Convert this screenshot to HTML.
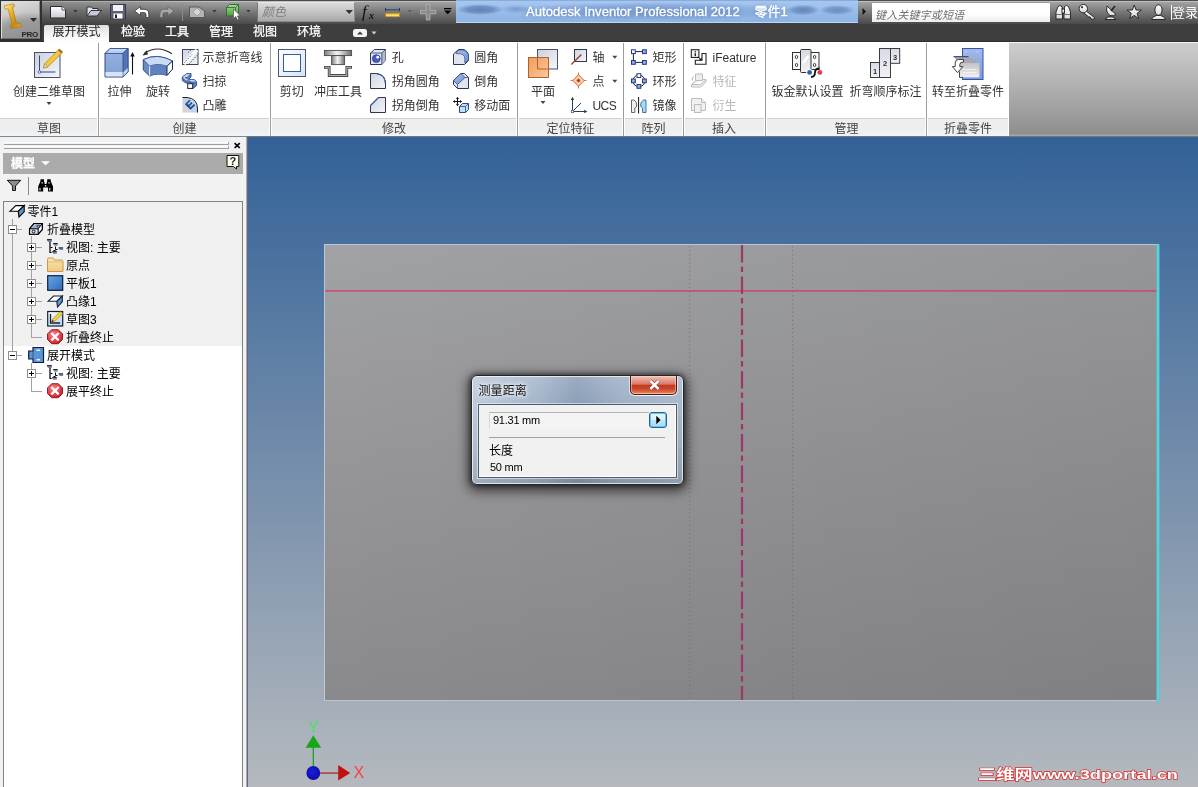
<!DOCTYPE html>
<html lang="zh-CN">
<head>
<meta charset="utf-8">
<title>Autodesk Inventor Professional 2012 零件1</title>
<style>
*{box-sizing:border-box;margin:0;padding:0}
html,body{width:1198px;height:787px;overflow:hidden;background:#fff}
body{position:relative;will-change:transform;font-family:"Liberation Sans","Noto Sans CJK SC",sans-serif;font-size:12px;color:#333;line-height:1}
.abs{position:absolute}
svg{position:absolute;overflow:visible}
/* ---------- title / quick access ---------- */
#qat{left:0;top:0;width:456px;height:24px;background:linear-gradient(90deg,rgba(0,0,0,.17) 0,rgba(0,0,0,.1) 90px,rgba(0,0,0,.02) 200px,rgba(0,0,0,0) 260px),linear-gradient(#4c4c4c 0,#4c4c4c 1px,#c0c0c0 1px,#c0c0c0 2px,#a2a2a2 2px,#8a8a8a 8px,#787878 12px,#686868 16px,#585858 20px,#505050 22.500px,#5a5a5a 23px,#3e3e3e 24px)}
#combo{left:257px;top:2px;width:98px;height:20px;background:linear-gradient(#dadada 0,#c6c6c6 45%,#a8a8a8 100%);border:1px solid #8a8a8a;border-top-color:#e8e8e8;border-left-color:#777}
#combo span{position:absolute;left:4px;top:3px;font-style:italic;color:#7c7c7c;font-size:12px}
#aero{left:456px;top:0;width:402px;height:24px;background:
radial-gradient(ellipse 24px 5.500px at 24px 9.500px,rgba(80,112,168,.78) 0,rgba(80,112,168,.6) 55%,rgba(80,112,168,0) 100%),
radial-gradient(ellipse 16px 4.500px at 60px 9px,rgba(86,118,172,.5) 0,rgba(86,118,172,0) 100%),
radial-gradient(ellipse 17px 5.500px at 347px 10px,rgba(80,112,168,.75) 0,rgba(80,112,168,.5) 55%,rgba(80,112,168,0) 100%),
radial-gradient(ellipse 18px 5px at 381px 10px,rgba(80,112,168,.65) 0,rgba(80,112,168,.45) 55%,rgba(80,112,168,0) 100%),
radial-gradient(ellipse 150px 9px at 200px 11px,rgba(96,130,190,.5) 0,rgba(96,130,190,.3) 60%,rgba(96,130,190,0) 100%),
linear-gradient(#7f9fca 0,#a4c6f0 1.500px,#9fc2ee 8px,#92b8e6 16px,#8fb5e4 21.500px,#bdd7f5 22px,#bdd7f5 23px,#3e3e3e 23px)}
#tright{left:858px;top:0;width:340px;height:24px;background:linear-gradient(#4c4c4c 0,#4c4c4c 1px,#c0c0c0 1px,#c0c0c0 2px,#a2a2a2 2px,#8a8a8a 8px,#787878 12px,#686868 16px,#585858 20px,#505050 22.500px,#5a5a5a 23px,#3e3e3e 24px)}
#search{left:872px;top:2px;width:178px;height:20px;background:linear-gradient(#fff 0,#fff 60%,#ececec 100%);border-top:1px solid #9a9a9a}
#search span{position:absolute;left:3px;top:7px;font-style:italic;color:#6e6e6e;font-size:11px;white-space:nowrap;letter-spacing:.15px}
#login{left:1172px;top:6px;color:#fff;font-size:13px;white-space:nowrap;letter-spacing:0}
#tabbar{left:0;top:24px;width:1198px;height:18px;background:#3e3e3e;border-bottom:1px solid #2e2e2e}
#title{left:526px;top:5px;color:#fff;font-size:13px;white-space:pre;letter-spacing:.04px;-webkit-text-stroke:.3px #fff;text-shadow:0 0 4px rgba(50,80,140,.55)}
#appbtn{left:0;top:0;width:42px;height:41px;background:#303030}
#appbtn i{position:absolute;left:1px;top:1px;width:39px;height:38px;background:radial-gradient(ellipse 62px 36px at 78% 110%,rgba(110,110,110,.5) 0,rgba(110,110,110,.42) 60%,rgba(110,110,110,0) 82%),linear-gradient(165deg,#e0e0e0 0,#c6c6c6 40%,#acacac 100%);border:1px solid #dcdcdc;border-right-color:#909090;border-bottom-color:#6c6c6c}
#pro{left:21.500px;top:31px;font-size:8px;font-weight:bold;color:#262626;letter-spacing:-.35px}
.tab{top:25px;height:17px;color:#fff;-webkit-text-stroke:.25px #fff;font-size:12px;line-height:15px;text-align:center;white-space:nowrap}
#tabact{left:44px;top:25px;width:65px;height:17px;background:linear-gradient(#dcdcdc 0,#efefef 40%,#fff 100%);border-radius:2px 2px 0 0}
/* ---------- ribbon ---------- */
#ribbon{left:0;top:42px;width:1009px;height:94px;background:#fff}
#ribtitles{left:0;top:118px;width:1008px;height:18px;background:linear-gradient(#eee 0,#eee 65%,#eaf0f6 75%,#eef2f6 88%,#f4f4f4 100%);border-top:1px solid #d0d0d0}
#ribright{left:1009px;top:42px;width:189px;height:94px;background:linear-gradient(#f4f4f4 0,#f4f4f4 1px,#cdcdcd 1px,#b8b8b8 35%,#9e9e9e 75%,#8e8e8e 92px,#a8a4a4 93px,#a8a4a4 94px)}
.vsep{top:43px;width:3px;height:93px;margin-left:-1px;background:linear-gradient(90deg,#fff 0,#fff 1px,#9c9c9c 1px,#9c9c9c 2px,#fff 2px)}
.pt{top:122px;height:14px;line-height:14px;text-align:center;color:#444;font-size:12px}
.big{top:85px;height:14px;line-height:14px;text-align:center;white-space:nowrap;color:#333}
.sm{height:14px;line-height:14px;white-space:nowrap;color:#333}
.dis{color:#b8b8b8}
.dd{width:0;height:0;border-left:3px solid transparent;border-right:3px solid transparent;border-top:3px solid #444}
/* ---------- browser panel ---------- */
#panel{left:0;top:136px;width:248px;height:651px;background:#f2f2f2;border-top:1px solid #868686;border-right:1px solid #5f6b7b}
#panel:after{content:"";position:absolute;right:0;top:0;width:1px;height:100%;background:#a8aeb8}
#phead{left:3px;top:153px;width:240px;height:21px;background:#ababab}
#phead b{position:absolute;left:8px;top:5px;-webkit-text-stroke:.3px #fff;color:#fff;font-size:12px;text-shadow:0 0 1px #999}
#tree{left:3px;top:201px;width:240px;height:590px;border:1px solid #828282;background:#fff}
#treegray{left:4px;top:202px;width:238px;height:144px;background:#f0f0f0}
.tr{height:18px;line-height:18px;white-space:nowrap;color:#000;font-size:12px}
.exp{width:9px;height:9px;border:1px solid #919191;background:#fff}
.exp:before{content:"";position:absolute;left:1px;top:3px;width:5px;height:1px;background:#000}
.exp.plus:after{content:"";position:absolute;left:3px;top:1px;width:1px;height:5px;background:#000}
.tl{background:#a0a0a0}
/* ---------- viewport ---------- */
#view{left:248px;top:137px;width:950px;height:650px;background:linear-gradient(#326198 0,#b5b9be 100%)}
#viewtop{left:247px;top:136px;width:951px;height:2px;background:linear-gradient(#6c7684 0,#6c7684 50%,#3f628f 50%)}
#sheet{left:324px;top:244px;width:834px;height:457px;background:linear-gradient(90deg,rgba(0,0,0,0) 0,rgba(0,0,0,.075) 100%),linear-gradient(#a1a2a4 0,#8a898c 100%);border-left:1px solid #bcc6d4;border-top:1px solid #b8c6da;border-bottom:1px solid #c0c5cc}
/* ---------- dialog ---------- */
#dlg{left:471px;top:375px;width:213px;height:110px;border-radius:6px;border:1px solid #262626;background:linear-gradient(rgba(255,255,255,.14) 0,rgba(255,255,255,0) 28px,rgba(0,0,0,.05) 60%,rgba(0,0,0,.15) 100%),linear-gradient(90deg,#bdcbdc 0,#a6b7cc 30%,#8b9eb7 50%,#9fb0c6 70%,#a9b8cc 100%);box-shadow:0 3px 12px 3px rgba(0,0,0,.62),0 0 4px 1px rgba(0,0,0,.4),inset 0 0 0 1px rgba(255,255,255,.7)}
#dlgin{left:478px;top:404px;width:199px;height:74px;background:#f1f1f1;border:1px solid #4e5a68;box-shadow:0 0 0 1px rgba(235,242,252,.62),inset -1px -1px 0 #fff}
#dlgt{left:478.500px;top:385px;letter-spacing:.1px;font-size:12px;color:#111;text-shadow:0 0 6px #fff,0 0 4px #fff}
#dclose{left:630px;top:376px;width:47px;height:19px;border:1px solid #4a1a14;border-top:0;border-radius:0 0 5px 5px;background:linear-gradient(#f0c4ba 0,#e39a8c 25%,#d8796a 46%,#c23a20 50%,#c8442a 70%,#dc7048 90%,#eaa078 100%);box-shadow:inset 0 0 0 1px rgba(255,225,215,.5),1px 1px 0 rgba(255,255,255,.6),-1px 1px 0 rgba(255,255,255,.6)}
#dfield{left:489px;top:412px;width:160px;height:16px;border-top:1px solid #b4b4b4;border-left:1px solid #d8d8d8;background:#f4f4f4}
#dbtn{left:649px;top:412px;width:18px;height:16px;border:1px solid #2c628b;border-radius:3px;background:linear-gradient(#eaf6fd 0,#d9f0fc 50%,#bee6fd 50%,#a7d9f5 100%);box-shadow:inset 0 0 0 1px #5fc8f0}
.dtx{font-size:11px;color:#000;white-space:nowrap;letter-spacing:-.25px}
</style>
</head>
<body>

<!-- title bar -->
<div class="abs" id="qat"></div>
<div class="abs" id="combo"><span>颜色</span></div>
<div class="abs" id="aero"></div>
<div class="abs" id="tright"></div>
<div class="abs" id="tabbar"></div>
<div class="abs" id="appbtn"><i></i></div>
<div class="abs" id="pro">PRO</div>
<div class="abs" id="title">Autodesk Inventor Professional 2012    零件1</div>
<div class="abs" id="search"><span>键入关键字或短语</span></div>
<div class="abs" id="login">登录</div>
<div class="abs" id="tabact"></div>
<svg class="abs" style="left:0;top:0" width="1198" height="42" viewBox="0 0 1198 42">
<defs>
<linearGradient id="gold" x1="0" y1="0" x2="1" y2="1"><stop offset="0" stop-color="#fff0a0"/><stop offset=".35" stop-color="#f0b828"/><stop offset=".7" stop-color="#c88810"/><stop offset="1" stop-color="#e8a820"/></linearGradient>
<linearGradient id="wg" x1="0" y1="0" x2="0" y2="1"><stop offset="0" stop-color="#fff"/><stop offset="1" stop-color="#c8ccd8"/></linearGradient>
<linearGradient id="grn" x1="0" y1="0" x2="0" y2="1"><stop offset="0" stop-color="#a8dc98"/><stop offset="1" stop-color="#4c9c40"/></linearGradient>
</defs>
<!-- I logo -->
<path d="M4.200 5.800 L13.800 3.800 L14.600 6.600 L12.400 7.200 L16.400 23 L20.600 23.400 L21.600 26.600 L10.800 28.400 L10 25.600 L12.200 25 L8.200 9 L5 9 Z" fill="url(#gold)" stroke="#9a6a08" stroke-width=".5"/>
<path d="M30 18 L37 18 L33.5 22 Z" fill="#2c2c2c"/>
<!-- new -->
<path d="M50.5 6.5 H62 L65.5 10 V18 H50.5 Z" fill="url(#wg)" stroke="#2a2a2a" stroke-width="1"/>
<path d="M62 6.5 V10 H65.5" fill="#fff" stroke="#2a2a2a" stroke-width=".8"/>
<path d="M73.200 10 h4.400 l-2.200 2.600 z" fill="#333"/>
<!-- open -->
<path d="M87 15.5 V7 H91.5 L92.5 8.5 H98 V10.5" fill="#dfe3ec" stroke="#333" stroke-width="1"/>
<path d="M87 16 L91 10.5 H101.5 L97 16 Z" fill="#c4cad8" stroke="#333" stroke-width="1"/>
<!-- save -->
<rect x="110.500" y="4.500" width="15" height="14.500" fill="#5c6178" stroke="#34384c"/>
<rect x="113" y="5" width="10" height="6" fill="#f2f2f6"/>
<rect x="113.5" y="13.5" width="9" height="5" fill="#fff"/>
<rect x="115" y="14.5" width="2" height="3.5" fill="#222"/>
<!-- undo -->
<path d="M134.5 11 L140.5 6.5 V9.3 H144 Q148.8 9.3 148.8 14 V17.5 H146 V14.5 Q146 12.6 144 12.6 H140.5 V15.5 Z" fill="#fff" stroke="#333" stroke-width=".8"/>
<!-- redo -->
<path d="M174 11 L168 6.5 V9.3 H164.5 Q160 9.3 160 14 V17.5 H162.8 V14.5 Q162.8 12.6 164.5 12.6 H168 V15.5 Z" fill="#a8a8a8" stroke="#5a5a5a" stroke-width=".6"/>
<rect x="182" y="3" width="1" height="18" fill="#8a8a8a"/>
<!-- material -->
<path d="M189.5 7 H199 L204.5 11 V17.5 H189.5 Z" fill="#b4b4b4" stroke="#4a4a4a" stroke-width=".8"/>
<path d="M193 12 L197 8 L201 12 L197 16 Z" fill="#d8d8d8" stroke="#8a8a8a" stroke-width=".6"/>
<path d="M212.300 10 h4.400 l-2.200 2.600 z" fill="#383838"/>
<!-- green box -->
<path d="M226.5 7.5 L229.5 4.5 H238.5 V13 L235.5 16 H226.5 Z" fill="url(#grn)" stroke="#2c6a24" stroke-width=".9"/>
<path d="M226.5 7.5 H235.5 V16 M235.5 7.5 L238.5 4.5" fill="none" stroke="#2c6a24" stroke-width=".8"/>
<path d="M233.5 9 L233.5 18.5 L235.8 16.5 L237.5 20 L239 19.3 L237.4 16 L240 15.6 Z" fill="#fff" stroke="#333" stroke-width=".5"/>
<path d="M246.100 10 h4.400 l-2.200 2.600 z" fill="#383838"/>
<!-- combo arrow -->
<path d="M345.5 10 h7.5 l-3.75 4 z" fill="#333"/>
<!-- fx -->
<text x="362" y="17" font-family="Liberation Serif,serif" font-style="italic" font-size="17" fill="#111">f</text>
<text x="369" y="19" font-family="Liberation Serif,serif" font-style="italic" font-weight="bold" font-size="10" fill="#111">x</text>
<!-- measure -->
<path d="M385.5 8 V11.5 M399.5 8 V11.5 M385.5 9.8 H399.5" stroke="#27406a" stroke-width="1" fill="none"/>
<rect x="385.5" y="13.3" width="14" height="3.2" fill="#f4d040" stroke="#d08a10" stroke-width=".8"/>
<path d="M388 15 v1.5 M390.5 15 v1.5 M393 15 v1.5 M395.5 15 v1.5 M398 15 v1.5" stroke="#fff" stroke-width=".8"/>
<path d="M407.5 10 h4.4 l-2.2 2.6 z" fill="#5a5a5a"/>
<!-- plus -->
<path d="M426.3 4.5 H430 V10.3 H435.8 V13.8 H430 V20 H426.3 V13.8 H420.5 V10.3 H426.3 Z" fill="#8c8c8c" stroke="#b0b0b0" stroke-width=".9"/>
<!-- customize -->
<rect x="444" y="8" width="7.4" height="1.3" fill="#000"/>
<path d="M444 10.5 h7.4 l-3.7 3.8 z" fill="#000"/>
<!-- search arrow -->
<path d="M862.5 8 L866 11.5 L862.5 15 Z" fill="#111"/>
<!-- tab-extra icon -->
<rect x="353" y="29" width="14" height="8" rx="2.5" fill="#f4f4f4"/>
<path d="M357 34.5 L360 31.5 L363 34.5 Z" fill="#3c3c3c"/>
<path d="M371.5 31.5 h5 l-2.5 3 z" fill="#d0d0d0"/>
</svg>

<svg class="abs" style="left:1048px;top:0" width="150" height="26" viewBox="1048 0 150 26">
<defs><linearGradient id="wg2" x1="0" y1="0" x2="0" y2="1"><stop offset="0" stop-color="#fff"/><stop offset="1" stop-color="#d4d6dc"/></linearGradient></defs>
<!-- binoculars -->
<g fill="url(#wg2)" stroke="#1c1c1c" stroke-width=".9">
<path d="M1056 19 V12 L1058 6.5 Q1060 4.5 1062 6.5 L1062.5 12 V19 Z"/>
<path d="M1070.5 19 V12 L1068.5 6.5 Q1066.5 4.5 1064.5 6.5 L1064 12 V19 Z"/>
<rect x="1062" y="9" width="2.5" height="4"/>
</g>
<path d="M1056 14.5 h6.5 M1064 14.5 h6.5" stroke="#555" stroke-width=".8"/>
<!-- key -->
<g fill="url(#wg2)" stroke="#1c1c1c" stroke-width=".9">
<path d="M1085.5 10.5 L1094.5 17.5 L1093.6 19.4 L1091 19 L1090.4 17.2 L1088.6 16.8 L1083.4 12.6 Z"/>
<circle cx="1083.3" cy="8.6" r="4.2"/>
</g>
<circle cx="1082" cy="7.2" r="1.1" fill="#333"/>
<!-- dish -->
<g fill="url(#wg2)" stroke="#1c1c1c" stroke-width=".9">
<path d="M1108 17 L1113 17 L1116 19.5 H1105 Z"/>
<path d="M1107 6 Q1105.5 12.5 1110 15.5 Q1113.5 16.5 1116 14.5 Z"/>
</g>
<path d="M1111 11 L1115 6" stroke="#1c1c1c" stroke-width="1.4"/>
<!-- star -->
<path d="M1134.2 5 L1136 10 L1141.3 10.1 L1137.1 13.3 L1138.6 18.5 L1134.2 15.4 L1129.8 18.5 L1131.3 13.3 L1127.1 10.1 L1132.4 10 Z" fill="url(#wg2)" stroke="#1c1c1c" stroke-width=".9"/>
<!-- person -->
<g fill="url(#wg2)" stroke="#1c1c1c" stroke-width=".9">
<path d="M1151.5 19.5 Q1152 16.5 1156.5 15.5 L1160.5 15.5 Q1165 16.5 1165.5 19.5 Z"/>
<ellipse cx="1158.5" cy="10" rx="3.6" ry="5.3"/>
</g>
<rect x="1171" y="5" width="1" height="15" fill="#fff"/>
</svg>

<div class="abs tab" style="left:41.5px;width:70px;color:#222;-webkit-text-stroke:0;">展开模式</div>
<div class="abs tab" style="left:98.0px;width:70px;">检验</div>
<div class="abs tab" style="left:142.0px;width:70px;">工具</div>
<div class="abs tab" style="left:186.0px;width:70px;">管理</div>
<div class="abs tab" style="left:230.0px;width:70px;">视图</div>
<div class="abs tab" style="left:274.0px;width:70px;">环境</div>
<div class="abs" id="ribbon"></div>
<div class="abs" id="ribtitles"></div>
<div class="abs" id="ribright"></div>
<div class="abs vsep" style="left:98px"></div>
<div class="abs vsep" style="left:270px"></div>
<div class="abs vsep" style="left:517px"></div>
<div class="abs vsep" style="left:623px"></div>
<div class="abs vsep" style="left:683px"></div>
<div class="abs vsep" style="left:765px"></div>
<div class="abs vsep" style="left:926px"></div>
<div class="abs pt" style="left:9px;width:80px">草图</div>
<div class="abs pt" style="left:144.5px;width:80px">创建</div>
<div class="abs pt" style="left:354px;width:80px">修改</div>
<div class="abs pt" style="left:530.5px;width:80px">定位特征</div>
<div class="abs pt" style="left:613.5px;width:80px">阵列</div>
<div class="abs pt" style="left:684px;width:80px">插入</div>
<div class="abs pt" style="left:806.5px;width:80px">管理</div>
<div class="abs pt" style="left:928px;width:80px">折叠零件</div>
<div class="abs big" style="left:-1px;width:100px">创建二维草图</div>
<div class="abs big" style="left:69.5px;width:100px">拉伸</div>
<div class="abs big" style="left:108px;width:100px">旋转</div>
<div class="abs big" style="left:241.75px;width:100px">剪切</div>
<div class="abs big" style="left:288px;width:100px">冲压工具</div>
<div class="abs big" style="left:493px;width:100px">平面</div>
<div class="abs big" style="left:757.5px;width:100px">钣金默认设置</div>
<div class="abs big" style="left:835.4px;width:100px">折弯顺序标注</div>
<div class="abs big" style="left:918px;width:100px">转至折叠零件</div>
<div class="abs sm" style="left:202.5px;top:50.5px">示意折弯线</div>
<div class="abs sm" style="left:202.5px;top:74.5px">扫掠</div>
<div class="abs sm" style="left:202.5px;top:98.5px">凸雕</div>
<div class="abs sm" style="left:391.75px;top:50.5px">孔</div>
<div class="abs sm" style="left:391.75px;top:74.5px">拐角圆角</div>
<div class="abs sm" style="left:391.75px;top:98.5px">拐角倒角</div>
<div class="abs sm" style="left:474.25px;top:50.5px">圆角</div>
<div class="abs sm" style="left:474.25px;top:74.5px">倒角</div>
<div class="abs sm" style="left:474.25px;top:98.5px">移动面</div>
<div class="abs sm" style="left:592.5px;top:50.5px">轴</div>
<div class="abs sm" style="left:592.5px;top:74.5px">点</div>
<div class="abs sm" style="left:592.5px;top:98.5px"><span style="letter-spacing:-.6px">UCS</span></div>
<div class="abs sm" style="left:652.5px;top:50.5px">矩形</div>
<div class="abs sm" style="left:652.5px;top:74.5px">环形</div>
<div class="abs sm" style="left:652.5px;top:98.5px">镜像</div>
<div class="abs sm" style="left:712.5px;top:50.5px">iFeature</div>
<div class="abs sm" style="left:712.5px;top:74.5px"><span class=dis>特征</span></div>
<div class="abs sm" style="left:712.5px;top:98.5px"><span class=dis>衍生</span></div>
<svg class="abs" style="left:0;top:42px" width="1009" height="94" viewBox="0 42 1009 94">
<defs>
<linearGradient id="gb" x1="0" y1="0" x2="1" y2="1"><stop offset="0" stop-color="#c9d0de"/><stop offset="1" stop-color="#f6f7fa"/></linearGradient>
<linearGradient id="gb2" x1="0" y1="0" x2="0" y2="1"><stop offset="0" stop-color="#d5dae4"/><stop offset="1" stop-color="#f2f3f6"/></linearGradient>
<linearGradient id="bl" x1="0" y1="0" x2="0" y2="1"><stop offset="0" stop-color="#9ab4e0"/><stop offset="1" stop-color="#7f9fd4"/></linearGradient>
<linearGradient id="blt" x1="0" y1="0" x2="0" y2="1"><stop offset="0" stop-color="#cfe0f6"/><stop offset="1" stop-color="#a9c4ea"/></linearGradient>
<linearGradient id="org" x1="0" y1="0" x2="1" y2="1"><stop offset="0" stop-color="#f39a58"/><stop offset="1" stop-color="#fcc79c"/></linearGradient>
<linearGradient id="met" x1="0" y1="0" x2="1" y2="0"><stop offset="0" stop-color="#7c7c7c"/><stop offset=".45" stop-color="#f2f2f2"/><stop offset=".6" stop-color="#d8d8d8"/><stop offset="1" stop-color="#6c6c6c"/></linearGradient>
<linearGradient id="cut" x1="0" y1="0" x2="1" y2="1"><stop offset="0" stop-color="#fff"/><stop offset="1" stop-color="#d6e2f2"/></linearGradient>
<linearGradient id="gry" x1="0" y1="0" x2="0" y2="1"><stop offset="0" stop-color="#c2c2c4"/><stop offset="1" stop-color="#f2f2f2"/></linearGradient>
<linearGradient id="fb" x1="0" y1="0" x2="0" y2="1"><stop offset="0" stop-color="#a4baec"/><stop offset="1" stop-color="#7d98dc"/></linearGradient>
</defs>
<!-- sketch -->
<rect x="34.5" y="52.5" width="25.5" height="25" fill="url(#gb)" stroke="#4a5068" stroke-width="1"/>
<path d="M39.5 55.5 V72 H55.5" fill="none" stroke="#3a4a78" stroke-width="1"/>
<circle cx="39.5" cy="72" r="1.3" fill="#fff" stroke="#2c4a9c" stroke-width=".8"/>
<path d="M43.5 68 L44.6 63.8 L59.4 48.9 L62.6 52.1 L47.7 66.9 Z" fill="#f4c838" stroke="#b8860c" stroke-width=".8"/>
<path d="M43.5 68 L44.6 63.8 L47.7 66.9 Z" fill="#f4e2c0" stroke="#9a7a40" stroke-width=".6"/>
<path d="M58 50.3 L59.4 48.9 L62.6 52.1 L61.2 53.5 Z" fill="#a46a28"/>
<path d="M47 49 47 49" />
<path d="M46.5 102 h5 l-2.5 3 z" fill="#444"/>
<!-- extrude -->
<path d="M105 53.5 L110 48.5 H128 V72 L123 77 H105 Z" fill="url(#bl)" stroke="#2c4a8c" stroke-width="1"/>
<path d="M105 53.5 L110 48.5 H128 L123 53.5 Z" fill="url(#blt)" stroke="#2c4a8c" stroke-width=".8"/>
<path d="M123 53.5 L128 48.5 V72 L123 77 Z" fill="#5574b4" stroke="#2c4a8c" stroke-width=".8"/>
<path d="M105.5 72 H122.6 V76.5 H105.5 Z" fill="#d6e4f6"/>
<path d="M123.4 72 L127.6 68 V71.8 L123.4 76.2 Z" fill="#c6d6ee"/>
<path d="M132.5 74.5 V54" stroke="#111" stroke-width="1.1"/>
<path d="M130.2 56.5 L132.5 52 L134.8 56.5 Z" fill="#111"/>
<!-- revolve -->
<path d="M172 53.800 Q158 44.600 144.800 53" fill="none" stroke="#2a2a2a" stroke-width="1.200"/>
<path d="M142.400 55.400 L146.600 50.200 L148 54.600 Z" fill="#2a2a2a"/>
<path d="M143.300 59.600 Q157.500 52.600 172.500 61 V69.200 L167 75.300 Q157.500 72.600 149.600 76 L143.300 70 Z" fill="#6a8cc4" stroke="#2c4a8c" stroke-width="1" stroke-linejoin="round"/>
<path d="M143.300 59.600 Q157.500 52.600 172.500 61 L167 66.200 Q157.500 62.800 149.600 66.200 Z" fill="#c9dcf4" stroke="#2c4a8c" stroke-width=".800" stroke-linejoin="round"/>
<path d="M149.600 66.200 Q157.500 62.800 167 66.200 V75.300 Q157.500 72.600 149.600 76 Z" fill="#5f82be"/>
<path d="M149.600 66.400 V75.800" stroke="#eef4fc" stroke-width="1"/>
<path d="M167 66.200 L172.500 61 V69.200 L167 75.300 Z" fill="#fff" stroke="#1c2c50" stroke-width="1" stroke-linejoin="round"/>
<!-- cut -->
<rect x="278.5" y="49.5" width="27" height="27" fill="url(#cut)" stroke="#50566a" stroke-width="1"/>
<rect x="283.5" y="54.5" width="17" height="17" fill="#fff" stroke="#2f5fa4" stroke-width="1"/>
<!-- punch -->
<rect x="324.400" y="50.400" width="27.200" height="5.200" fill="url(#met)" stroke="#4a4a4a" stroke-width=".900"/>
<rect x="331.600" y="55.600" width="13" height="9" fill="url(#met)" stroke="#4a4a4a" stroke-width=".900"/>
<path d="M324 67.300 H329.200 V75.500 H346.800 V67.300 H352" fill="none" stroke="#484848" stroke-width="2.800"/>
<path d="M324.800 67.300 H329.200 V75.500 H346.800 V67.300 H351.200" fill="none" stroke="#c4c4c4" stroke-width=".900"/>
<!-- plane -->
<rect x="537.5" y="49.5" width="20" height="19.5" fill="url(#gb)" stroke="#4a5068" stroke-width="1"/>
<rect x="528.5" y="57.5" width="20" height="20" fill="url(#org)" stroke="#b0622c" stroke-width="1"/>
<path d="M537.5 57.5 V69 H548.5" fill="none" stroke="#a0602c" stroke-width=".9"/>
<path d="M540.5 101 h5 l-2.5 3 z" fill="#444"/>
<!-- sheet metal defaults -->
<rect x="792.5" y="52.5" width="26.5" height="17" fill="#fafafa" stroke="#333" stroke-width="1"/>
<rect x="800.5" y="49.5" width="10.5" height="23" rx="1" fill="url(#gb2)" stroke="#333" stroke-width="1"/>
<path d="M803 63 L808.5 56" stroke="#fff" stroke-width="2.2"/>
<g fill="none" stroke="#333" stroke-width=".9"><ellipse cx="796.5" cy="57" rx="1.2" ry="1.6"/><ellipse cx="796.5" cy="65" rx="1.2" ry="1.6"/><ellipse cx="814.6" cy="57" rx="1.2" ry="1.6"/><ellipse cx="814.6" cy="65" rx="1.2" ry="1.6"/></g>
<circle cx="809.6" cy="72.4" r="3.4" fill="#fff"/>
<path d="M811 77 Q815 77 815 72.5 Q815 68.5 819.5 68.5" fill="none" stroke="#111" stroke-width="1.8"/>
<circle cx="809.6" cy="72.4" r="2.4" fill="#2c64a4"/>
<circle cx="819.8" cy="72.4" r="2.4" fill="#e03c50"/>
<!-- bend order -->
<rect x="879.5" y="48.5" width="11" height="29" fill="url(#gb2)" stroke="#3c3c3c" stroke-width="1"/>
<rect x="870.5" y="62.5" width="9" height="15" fill="url(#gb2)" stroke="#3c3c3c" stroke-width="1"/>
<rect x="890.5" y="48.5" width="9.2" height="14.8" fill="url(#gb2)" stroke="#3c3c3c" stroke-width="1"/>
<g font-family="Liberation Sans,sans-serif" font-weight="bold" font-size="7.5" fill="#333" text-anchor="middle"><text x="875.2" y="73.5">1</text><text x="885" y="66">2</text><text x="895.2" y="59.5">3</text></g>
<!-- go to folded -->
<rect x="962.5" y="48.5" width="20.5" height="31" fill="url(#fb)" stroke="#3355a8" stroke-width="1"/>
<g fill="#b8c8f0"><rect x="965" y="51" width="2.2" height="1.6"/><rect x="976.5" y="51" width="2.2" height="1.6"/></g>
<path d="M953.5 56.5 H968 L979.4 63 H959.4 Z" fill="#a6a8b4"/>
<path d="M953.5 56.7 H968.5" stroke="#2a3560" stroke-width="1"/>
<rect x="959.4" y="63" width="20" height="14.3" fill="url(#gry)"/>
<path d="M963 69.5 h13 M963 72.5 h13" stroke="#fff" stroke-width=".8" opacity=".7"/>
<path d="M963.500 59.500 H958.500 Q955.200 59.500 955.200 63 V66.600 H952.300 L957.500 72.600 L962.800 66.600 H959.800 V64.600 Q959.800 62 963.500 61.900 Z" fill="#fff" stroke="#2c2c2c" stroke-width=".900" stroke-linejoin="round"/>
<path d="M959.500 71.500 V77.400 H963" fill="none" stroke="#333" stroke-width=".900"/>
</svg>

<svg class="abs" style="left:0;top:42px" width="1009" height="94" viewBox="0 42 1009 94">
<defs>
<linearGradient id="sg" x1="0" y1="0" x2="1" y2="1"><stop offset="0" stop-color="#cdd4e2"/><stop offset="1" stop-color="#f4f5f9"/></linearGradient>
<linearGradient id="sb" x1="0" y1="0" x2="1" y2="1"><stop offset="0" stop-color="#a9c4f0"/><stop offset="1" stop-color="#6c8ed4"/></linearGradient>
</defs>
<!-- A1 cosmetic centerline -->
<rect x="182.5" y="49.5" width="15.5" height="15" fill="url(#sg)" stroke="#3a4058" stroke-width="1"/>
<path d="M184 64 L197 50" stroke="#fff" stroke-width="3.4"/>
<path d="M184.5 62.5 L192 54.5 M189.5 63.5 L197 55.5 M188 52.5 L191 50" stroke="#2e3a58" stroke-width="1" stroke-dasharray="1.100 1.400"/>
<!-- A2 sweep -->
<path d="M187 73.500 H191 V77 L188.500 79.500 H194 L196.600 82 V85.500 L193 88.500 H189 V86 L192 83 H186 L182.300 80.500 V77 Z" fill="#5f7fbc" stroke="#2c4a8c" stroke-width=".900" stroke-linejoin="round"/>
<path d="M187 73.500 H191 L187 77.500 H185 L188.500 79.500 H194 L196.600 82 H191 L189.500 80.800 H185.500 L182.300 77 Z" fill="#c4d6f0" stroke="#2c4a8c" stroke-width=".600" stroke-linejoin="round"/>
<rect x="187.700" y="83.700" width="5" height="4.700" fill="#fff" stroke="#1c2338" stroke-width="1"/>
<!-- A3 emboss -->
<path d="M182.500 97.500 Q197.500 97.500 197.500 112.500 H191 Q190.500 104.500 182.500 104 Z" fill="#bdd2ee"/>
<path d="M182.500 104 Q190.500 104.500 191 112.500 H182.500 Z" fill="#d4d4d8"/>
<path d="M182.500 97.500 H187 Q197.500 98.500 197.500 109 V112.500" fill="none" stroke="#1a1a1a" stroke-width="1"/>
<text transform="translate(190 109.900) rotate(-45)" font-family="Liberation Sans,sans-serif" font-weight="bold" font-size="11" fill="#1b4b8d" stroke="#1b4b8d" stroke-width=".400">E</text>
<!-- B1 hole -->
<path d="M370.5 53 L374.5 49.5 H385.5 V60.5 L381.8 64.5 H370.5 Z" fill="#dfe6f4" stroke="#2a3558" stroke-width="1"/>
<path d="M381.8 53 L385.5 49.5 V60.5 L381.8 64.5 Z" fill="#b4bccc"/>
<path d="M370.5 53 H381.8 V64.5 M381.8 53 L385.5 49.5" fill="none" stroke="#2a3558" stroke-width=".8"/>
<circle cx="376.3" cy="58.6" r="3.9" fill="#4a5cc4" stroke="#2a3890" stroke-width=".8"/>
<circle cx="377.7" cy="57.2" r="1.4" fill="#fff"/>
<!-- B2 corner round -->
<path d="M370.5 73.5 H376 Q385.5 74.5 385.5 84 V88.5 H370.5 Z" fill="url(#sg)" stroke="#30364c" stroke-width="1"/>
<path d="M376 73.5 Q385.5 74.5 385.5 84" fill="none" stroke="#2c5a9c" stroke-width="1.2" stroke-dasharray="3 1"/>
<!-- B3 corner chamfer -->
<path d="M370.5 105.5 L378.5 97.5 H385.5 V112.5 H370.5 Z" fill="url(#sg)" stroke="#30364c" stroke-width="1"/>
<path d="M370.5 105.5 L378.5 97.5" stroke="#2c5a9c" stroke-width="1.2"/>
<!-- C1 fillet -->
<path d="M453.5 54 L458.5 49.5 H463 Q468.5 50.5 468.5 57 V60.5 L464.5 64.5 H453.5 Z" fill="#e0e4ec" stroke="#2a3558" stroke-width="1"/>
<path d="M458.5 50 H463 Q468.5 51 468.5 57 V60 L464.8 63 V58.5 Q464.5 53.5 458 53.6 H456 Z" fill="url(#sb)" stroke="#2c4a8c" stroke-width=".7"/>
<!-- C2 chamfer -->
<path d="M453.5 80.5 L461 73.5 H464.5 L468.5 77.5 V88.5 H457.5 L453.5 84.5 Z" fill="#e0e4ec" stroke="#2a3558" stroke-width="1"/>
<path d="M453.5 80.5 L461 73.5 L465 77.5 L457.5 84.5 Z" fill="url(#sb)" stroke="#2c4a8c" stroke-width=".8"/>
<path d="M457.5 84.5 V88.5 M465 77.5 H468.5" stroke="#2a3558" stroke-width=".7"/>
<!-- C3 move face -->
<path d="M457.5 97.5 V105.5 M453.5 101.5 H461.5" stroke="#111" stroke-width="1.1"/>
<path d="M456 99 L457.5 97 L459 99 Z M456 104 L457.5 106 L459 104 Z M455 100 L453 101.5 L455 103 Z M460 100 L462 101.5 L460 103 Z" fill="#111"/>
<path d="M459.5 106.5 L462.5 103.5 H468.5 V109.5 L465.5 112.5 H459.5 Z" fill="#bfe0f8" stroke="#2c4a7c" stroke-width="1"/>
<path d="M459.5 106.5 H465.5 V112.5 M465.5 106.5 L468.5 103.5" fill="none" stroke="#2c4a7c" stroke-width=".8"/>
<!-- D1 axis -->
<rect x="574.5" y="49.5" width="12" height="12" fill="url(#sg)" stroke="#30364c" stroke-width="1"/>
<path d="M571.3 64.6 L581.4 54.5" stroke="#8c4a3a" stroke-width="1.4"/>
<path d="M612.3 55.8 h5 l-2.5 3 z M612.3 79.8 h5 l-2.5 3 z" fill="#444"/>
<!-- D2 point -->
<path d="M578.500 72.500 V88.500 M570.500 80.500 H586.500" stroke="#d8683a" stroke-width=".900"/>
<path d="M578.500 74.800 L584.200 80.500 L578.500 86.200 L572.800 80.500 Z" fill="#fbd3b6" stroke="#d0602e" stroke-width="1"/>
<circle cx="578.500" cy="80.500" r="1.700" fill="#8c3a1c" stroke="#f08a50" stroke-width=".800"/>
<!-- D3 UCS -->
<path d="M572.5 111.5 V98 M572.5 111.5 H586 M572.5 111.5 L581 103" fill="none" stroke="#2c3c54" stroke-width="1"/>
<path d="M570.8 100 L572.5 96.8 L574.2 100 Z M584.2 109.8 L587.4 111.5 L584.2 113.2 Z" fill="#2c3c54"/>
<rect x="571.3" y="110.3" width="2.4" height="2.4" fill="#fff" stroke="#2c5a9c" stroke-width=".7"/>
<!-- E1 rectangular -->
<path d="M633.4 51.6 H644.5 M633.4 51.6 V62.4 H644.5" fill="none" stroke="#223" stroke-width="1"/>
<rect x="631.5" y="49.8" width="3.8" height="3.8" fill="#fff" stroke="#223a7c" stroke-width="1"/>
<g fill="#8cacec" stroke="#223a7c" stroke-width="1"><rect x="642.5" y="49.8" width="3.8" height="3.8"/><rect x="631.5" y="60.5" width="3.8" height="3.8"/><rect x="642.5" y="60.5" width="3.8" height="3.8"/></g>
<!-- E2 circular -->
<circle cx="638.9" cy="80.9" r="5.9" fill="none" stroke="#223" stroke-width="1"/>
<rect x="637" y="73.7" width="3.8" height="3.8" fill="#fff" stroke="#223a7c" stroke-width="1"/>
<g fill="#8cacec" stroke="#223a7c" stroke-width="1"><rect x="631.5" y="79" width="3.8" height="3.8"/><rect x="642.5" y="79" width="3.8" height="3.8"/><rect x="637" y="84.5" width="3.8" height="3.8"/></g>
<!-- E3 mirror -->
<path d="M638.6 97 V113.5" stroke="#111" stroke-width="1"/>
<path d="M631.5 100 H634 Q636.8 101.5 636.8 105 Q636.8 107.5 634.8 108 V112.5 H631.5 Z" fill="#f0f0f0" stroke="#555" stroke-width=".9"/>
<path d="M646 100 H643.5 Q640.6 101.5 640.6 105 Q640.6 107.5 642.6 108 V112.5 H646 Z" fill="#a8d8f8" stroke="#2c6a9c" stroke-width=".9"/>
<!-- F1 iFeature -->
<path d="M702 53.5 H706 V64.3 H695.3 V60.3 H702 Z" fill="#fff" stroke="#222" stroke-width="1.1"/>
<rect x="691.3" y="49.7" width="7.6" height="7.8" fill="#f4f4f4" stroke="#222" stroke-width="1.1"/>
<rect x="694.6" y="51.2" width="1.3" height="1.2" fill="#111"/><rect x="694.6" y="53.2" width="1.3" height="3" fill="#111"/>
<path d="M698 56.8 L701 59.8" stroke="#111" stroke-width="1"/>
<path d="M701.6 57.6 V60.4 H698.8 Z" fill="#111"/>
<!-- F2 feature disabled -->
<g fill="#ededed" stroke="#bcbcbc" stroke-width="1">
<path d="M691.5 84.5 L697 79.5 H706 L700.5 84.5 Z M691.5 84.5 V87 H700.5 L706 82 V79.5"/>
<path d="M695.5 74 H702.5 V80.5 H695.5 Z"/>
</g>
<path d="M694 76.5 Q691 77.5 692.5 80.5" fill="none" stroke="#b4b4b4" stroke-width="1"/>
<!-- F3 derive disabled -->
<g fill="#f0f0f0" stroke="#bcbcbc" stroke-width="1">
<path d="M691.5 98.5 H701.5 L705.5 102.5 V110.5 H691.5 Z"/>
<path d="M701.5 98.5 V102.5 H705.5"/>
<rect x="694.5" y="104.5" width="6.5" height="8"/>
</g>
</svg>

<!-- browser panel -->
<div class="abs" id="panel"></div>
<div class="abs" id="phead"><b>模型</b></div>
<div class="abs" id="tree"></div>
<div class="abs" id="treegray"></div>
<div class="abs tr" style="left:27.5px;top:203px">零件1</div>
<div class="abs tr" style="left:47px;top:221px">折叠模型</div>
<div class="abs tr" style="left:66px;top:239px">视图: 主要</div>
<div class="abs tr" style="left:66px;top:257px">原点</div>
<div class="abs tr" style="left:66px;top:275px">平板1</div>
<div class="abs tr" style="left:66px;top:293px">凸缘1</div>
<div class="abs tr" style="left:66px;top:311px">草图3</div>
<div class="abs tr" style="left:66px;top:329px">折叠终止</div>
<div class="abs tr" style="left:47px;top:347px">展开模式</div>
<div class="abs tr" style="left:66px;top:365px">视图: 主要</div>
<div class="abs tr" style="left:66px;top:383px">展平终止</div>
<svg class="abs" style="left:0;top:136px" width="247" height="280" viewBox="0 136 247 280">
<defs>
<linearGradient id="tb" x1="0" y1="0" x2="1" y2="1"><stop offset="0" stop-color="#6aa6e6"/><stop offset="1" stop-color="#2c6cbc"/></linearGradient>
<linearGradient id="tf" x1="0" y1="0" x2="0" y2="1"><stop offset="0" stop-color="#fbe6b4"/><stop offset="1" stop-color="#f0c880"/></linearGradient>
<radialGradient id="rd" cx=".4" cy=".35" r=".7"><stop offset="0" stop-color="#f88"/><stop offset="1" stop-color="#d01828"/></radialGradient>
<linearGradient id="sk" x1="0" y1="0" x2="1" y2="1"><stop offset="0" stop-color="#fff"/><stop offset="1" stop-color="#b8d0e8"/></linearGradient>
</defs>
<!-- grip -->
<g>
<rect x="4" y="142" width="225" height="1" fill="#fff"/><rect x="4" y="144" width="225" height="1" fill="#a0a0a0"/><rect x="228" y="142" width="1" height="3" fill="#a0a0a0"/>
<rect x="4" y="146" width="225" height="1" fill="#fff"/><rect x="4" y="148" width="225" height="1" fill="#a0a0a0"/><rect x="228" y="146" width="1" height="3" fill="#a0a0a0"/>
</g>
<path d="M234.6 143.2 L239.8 148 M239.8 143.2 L234.6 148" stroke="#000" stroke-width="1.7"/>
<!-- header arrow -->
<path d="M41.2 161.3 h8.8 l-4.4 4 z" fill="#fff"/>
<!-- help -->
<path d="M227 155.5 H238.8 V166.5 H236.5 L236.5 169 L233.5 166.5 H227 Z" fill="#ffffe1" stroke="#111" stroke-width="1"/>
<text x="232.9" y="165.3" text-anchor="middle" font-family="Liberation Sans,sans-serif" font-weight="bold" font-size="11" fill="#1a1a6c">?</text>
<!-- filter -->
<path d="M7.3 180.3 H20.8 L15.5 186 V190.5 H12.6 V186 Z" fill="#8c8c8c" stroke="#111" stroke-width="1"/>
<rect x="28" y="177" width="1" height="18" fill="#8a8a8a"/>
<!-- binoculars -->
<g fill="#000"><path d="M38.2 191.5 V186.5 L40.5 181 V179.2 H44 V181 L44.8 184 H46.4 L47.2 181 V179.2 H50.7 V181 L53 186.5 V191.5 H48 V187.5 H43.2 V191.5 Z"/></g>
<g fill="#fff"><rect x="39.5" y="188" width="1" height="2.5"/><rect x="49.3" y="188" width="1" height="2.5"/><rect x="41.6" y="182" width="1" height="1.6"/><rect x="48.5" y="182" width="1" height="1.6"/><rect x="44.9" y="185.2" width="1.4" height="1.3"/></g>
<!-- tree lines -->
<g fill="#a2a2a2">
<rect x="12" y="219" width="1" height="132"/>
<rect x="17" y="229" width="5" height="1"/><rect x="17" y="355" width="5" height="1"/>
<rect x="31" y="236" width="1" height="101"/>
<rect x="36" y="247" width="6" height="1"/><rect x="36" y="265" width="6" height="1"/><rect x="36" y="283" width="6" height="1"/><rect x="36" y="301" width="6" height="1"/><rect x="36" y="319" width="6" height="1"/><rect x="31" y="337" width="11" height="1"/>
<rect x="31" y="363" width="1" height="29"/><rect x="36" y="373" width="6" height="1"/><rect x="31" y="391" width="11" height="1"/>
</g>
<!-- expanders -->
<g fill="#fff" stroke="#8e8e8e" stroke-width="1">
<rect x="8.5" y="225.500" width="8" height="8"/><rect x="8.500" y="351.500" width="8" height="8"/>
<rect x="27.5" y="243.5" width="8" height="8"/><rect x="27.5" y="261.5" width="8" height="8"/><rect x="27.5" y="279.5" width="8" height="8"/><rect x="27.5" y="297.5" width="8" height="8"/><rect x="27.5" y="315.5" width="8" height="8"/><rect x="27.5" y="369.5" width="8" height="8"/>
</g>
<g fill="#000">
<rect x="10" y="229" width="5" height="1"/><rect x="10" y="355" width="5" height="1"/>
<rect x="29" y="247" width="5" height="1"/><rect x="31" y="245" width="1" height="5"/>
<rect x="29" y="265" width="5" height="1"/><rect x="31" y="263" width="1" height="5"/>
<rect x="29" y="283" width="5" height="1"/><rect x="31" y="281" width="1" height="5"/>
<rect x="29" y="301" width="5" height="1"/><rect x="31" y="299" width="1" height="5"/>
<rect x="29" y="319" width="5" height="1"/><rect x="31" y="317" width="1" height="5"/>
<rect x="29" y="373" width="5" height="1"/><rect x="31" y="371" width="1" height="5"/>
</g>
<!-- row1 part icon -->
<path d="M9.8 211.3 L15.8 205.6 H24.2 L18.2 211.3 Z" fill="#fff" stroke="#000" stroke-width="1.1"/>
<path d="M18.2 211.3 L24.2 205.6 V211.8 L19 217 Z" fill="#5c94c8" stroke="#000" stroke-width="1.1"/>
<!-- row2 folded model icon -->
<path d="M29.500 228.800 L33.900 223.500 H42.400 V229.500 L38.200 234.200 H29.500 Z" fill="#fff" stroke="#000" stroke-width="1.100" stroke-linejoin="round"/>
<path d="M29.500 228.800 L33.900 223.500 H42.400 L38.200 228.800 Z" fill="#9db6d8"/>
<path d="M29.500 228.800 H38.200 V234.200 H29.500 Z" fill="#d3dfef"/>
<path d="M29.500 228.800 H38.200 L42.400 223.500 M38.200 228.800 V234.200" fill="none" stroke="#000" stroke-width="1"/>
<path d="M29.500 228.800 L33.900 223.500 H42.400 V229.500 L38.200 234.200 H29.500 Z" fill="none" stroke="#000" stroke-width="1.100" stroke-linejoin="round"/>
<circle cx="33.600" cy="231.500" r="1.400" fill="#eef3fa" stroke="#000" stroke-width=".900"/>
<ellipse cx="38.300" cy="226.200" rx="1.400" ry="1" fill="#eef3fa" stroke="#000" stroke-width=".800"/>
<!-- view rep icon (x2) -->
<g id="vr">
<path d="M50 241.500 V252.500 H51.600" fill="none" stroke="#000" stroke-width="1.200"/>
<path d="M50.500 247.500 H52.500 M55.500 246.500 V249.500 H57.500 M53.500 250.500 H55.500" fill="none" stroke="#000" stroke-width="1"/>
<g fill="#000"><rect x="47" y="239.200" width="4.800" height="1.300"/><rect x="53.200" y="243.100" width="4.400" height="1.200"/><rect x="58.600" y="247.400" width="4.500" height="1.200"/><rect x="52.200" y="251.200" width="4.600" height="1.200"/></g>
<g fill="#5878a8"><rect x="47.800" y="240.500" width="4" height="1.300"/><rect x="54" y="244.300" width="3.600" height="1.300"/><rect x="59.400" y="248.600" width="3.700" height="1.300"/><rect x="53" y="252.400" width="3.800" height="1.300"/></g>
</g>
<use href="#vr" y="126"/>
<!-- folder -->
<path d="M47.500 271.500 V259.500 Q47.500 258 49 258 H53 L54.500 260 H61.500 Q63 260 63 261.500 V271.500 Z" fill="url(#tf)" stroke="#c89848" stroke-width="1"/>
<path d="M47.500 262 H63" stroke="#e0b468" stroke-width=".8"/>
<!-- plate -->
<rect x="47.700" y="275.700" width="15" height="14.600" fill="url(#tb)" stroke="#10203c" stroke-width="1.200"/>
<!-- flange -->
<path d="M48 301.300 L53.500 296 H62.300 L56.800 301.300 Z" fill="#fff" stroke="#10203c" stroke-width="1.100"/>
<path d="M56.800 301.300 L62.300 296 V301.800 L57.500 307 Z" fill="#5c94c8" stroke="#10203c" stroke-width="1.100"/>
<!-- sketch -->
<rect x="47.700" y="311.500" width="15" height="14.500" fill="url(#sk)" stroke="#10203c" stroke-width="1.200"/>
<path d="M50.500 314 V323 H60" fill="none" stroke="#10203c" stroke-width="1.300"/>
<path d="M51.500 322 L53 318.500 L60.500 311.500 L62.800 313.800 L55 321 Z" fill="#f4d040" stroke="#a8800c" stroke-width=".6"/>
<path d="M51.500 322 L52.400 319.800 L53.800 321.200 Z" fill="#223"/>
<!-- stop icons -->
<g id="stp">
<path d="M51.700 329.700 H58.300 L62.500 333.900 V339.500 L58.300 343.700 H51.700 L47.500 339.500 V333.900 Z" fill="url(#rd)" stroke="#8c1018" stroke-width=".9"/>
<path d="M51.300 333 L58.700 340.400 M58.700 333 L51.300 340.400" stroke="#fff" stroke-width="2.300"/>
</g>
<use href="#stp" y="54"/>
<!-- flat pattern icon -->
<path d="M33 347.500 H43.500 V362.500 H33 V359 H28.700 V351 H33 Z" fill="#5c94d4" stroke="#10203c" stroke-width="1.200"/>
<rect x="36.500" y="349.500" width="3.500" height="1.500" fill="#e8f0fc"/><rect x="36.500" y="359" width="3.500" height="1.500" fill="#e8f0fc"/>
<path d="M33 351 V359" stroke="#2c4c84" stroke-width=".8"/>
</svg>

<!-- viewport -->
<div class="abs" id="view"></div>
<div class="abs" id="viewtop"></div>
<div class="abs" id="sheet"></div>
<svg class="abs" style="left:247px;top:137px" width="951" height="650" viewBox="247 137 951 650">
<defs>
<radialGradient id="sph" cx=".42" cy=".4" r=".65"><stop offset="0" stop-color="#1c1ce0"/><stop offset=".7" stop-color="#1010b8"/><stop offset="1" stop-color="#0c0c90"/></radialGradient>
<filter id="b1" x="-50%" y="-5%" width="200%" height="110%"><feGaussianBlur stdDeviation=".45"/></filter>
</defs>
<!-- sketch lines -->
<rect x="325" y="290.400" width="832" height="1.100" fill="#e32762"/>
<path d="M689.7 246 V700 M792.6 246 V700" stroke="#94506f" stroke-width="1" stroke-dasharray="1.100 3" fill="none" opacity=".75"/>
<path d="M742 245 V700" stroke="#9c366c" stroke-width="2.2" stroke-dasharray="17.500 4 5.500 4.500" fill="none"/>
<!-- cyan edge -->
<rect x="1156.5" y="244" width="3" height="457.500" fill="#4fc9d3" filter="url(#b1)"/>
<rect x="1157" y="244" width="2" height="457" fill="#5ad2da"/>
<!-- axes -->
<rect x="312.700" y="747" width="1.300" height="20" fill="#1f9f1f"/>
<path d="M313.300 735.300 L321.200 747.800 H305.600 Z" fill="#16a616"/>
<rect x="319" y="772.500" width="20" height="1.100" fill="#a81212"/>
<path d="M338.200 765 L350.200 773 L338.200 780.600 Z" fill="#c01212"/>
<circle cx="313.300" cy="773" r="6.900" fill="url(#sph)"/>
<text x="313.400" y="733" text-anchor="middle" font-family="Liberation Sans,sans-serif" font-size="16.500" fill="#4be168">Y</text>
<text x="358.900" y="778.400" text-anchor="middle" font-family="Liberation Sans,sans-serif" font-size="16" fill="#f24545">X</text>
<!-- watermark -->
<text x="978" y="779" font-family="Liberation Sans,'Noto Sans CJK SC',sans-serif" font-weight="bold" font-size="13.500" fill="#fff" stroke="#d93030" stroke-width="1.300" paint-order="stroke" textLength="200" lengthAdjust="spacingAndGlyphs">三维网www.3dportal.cn</text>
</svg>

<!-- dialog -->
<div class="abs" id="dlg"></div>
<div class="abs" id="dlgt">测量距离</div>
<div class="abs" id="dclose"></div>
<div class="abs" id="dlgin"></div>
<div class="abs" id="dfield"></div>
<div class="abs" id="dbtn"></div>
<div class="abs dtx" style="left:493px;top:415px">91.31 mm</div>
<div class="abs" style="left:489px;top:437px;width:176px;height:1px;background:#a0a0a0"></div>
<div class="abs dtx" style="left:489px;top:445px;font-size:12px;letter-spacing:0">长度</div>
<div class="abs dtx" style="left:490px;top:462px">50 mm</div>
<svg class="abs" style="left:630px;top:376px" width="60" height="60" viewBox="630 376 60 60">
<path d="M650.300 380.800 L658.600 389 M658.600 380.800 L650.300 389" stroke="#5a2018" stroke-width="3.600" opacity=".6"/>
<path d="M650.300 380.800 L658.600 389 M658.600 380.800 L650.300 389" stroke="#fff" stroke-width="2.500"/>
<path d="M656.300 415.800 L660.600 420 L656.300 424.200 Z" fill="#000"/>
</svg>

</body>
</html>
